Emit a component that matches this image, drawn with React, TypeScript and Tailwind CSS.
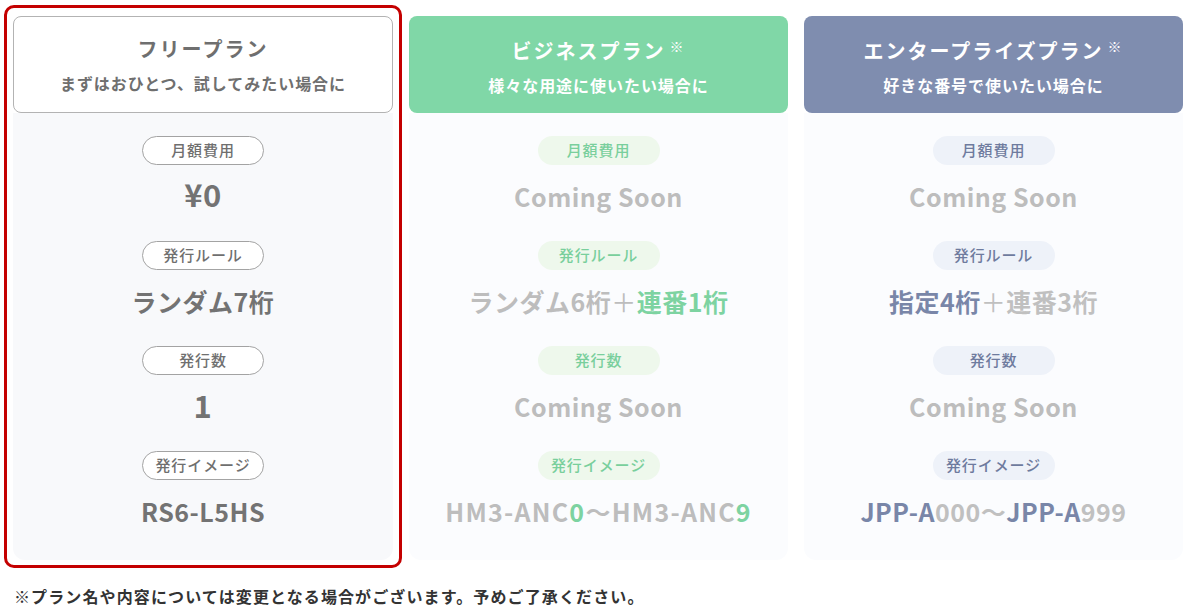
import React from 'react';

type Tone = 'free' | 'business' | 'enterprise';

const pillStyles: Record<Tone, string> = {
  free: 'bg-white border border-[#a3a3a3] text-[#6f6f6f]',
  business: 'bg-[#eef8ec] text-[#79cf9c]',
  enterprise: 'bg-[#eef2f9] text-[#6e7b9e]',
};

const bodyStyles: Record<Tone, string> = {
  free: 'bg-[#f8f9fb]',
  business: 'bg-[#fbfcfe]',
  enterprise: 'bg-[#fbfcfe]',
};

function Item({ label, tone, children }: { label: string; tone: Tone; children: React.ReactNode }) {
  return (
    <div className="flex flex-col items-center">
      <div
        className={`w-[122px] h-[29px] rounded-full flex items-center justify-center text-[15px] font-medium tracking-[0.06em] ${pillStyles[tone]}`}
      >
        {label}
      </div>
      <div className="mt-[11px] h-[40px] flex items-center text-[25px] font-bold tracking-[0.02em] leading-none">
        {children}
      </div>
    </div>
  );
}

function Header({ title, sub, tone, mark }: { title: string; sub: string; tone: Tone; mark?: boolean }) {
  const box =
    tone === 'free'
      ? 'bg-white border border-[#b3b3b3] text-[#6f6f6f]'
      : tone === 'business'
        ? 'bg-[#80d7a7] text-white'
        : 'bg-[#7f8daf] text-white';
  return (
    <div className={`h-[97px] rounded-[8px] flex flex-col items-center justify-center gap-[8px] ${box}`}>
      <div className="text-[20px] font-bold leading-[28px] tracking-[0.1em]">
        {title}
        {mark && <span className="ml-[4px] text-[14px] font-medium align-[7px]">※</span>}
      </div>
      <div className="text-[16px] font-bold leading-[24px] tracking-[0.06em]">{sub}</div>
    </div>
  );
}

function Column({ tone, header, items }: { tone: Tone; header: React.ReactNode; items: { label: string; value: React.ReactNode }[] }) {
  return (
    <div className="flex flex-col">
      {header}
      <div className={`rounded-b-[12px] pt-[23px] pb-[29px] flex flex-col gap-[25px] ${bodyStyles[tone]}`}>
        {items.map((it) => (
          <Item key={it.label} label={it.label} tone={tone}>
            {it.value}
          </Item>
        ))}
      </div>
    </div>
  );
}

export default function App() {
  const soon = <span className="text-[#bdbdbd]">Coming Soon</span>;

  return (
    <div
      className="w-[1200px] h-[613px] bg-white pl-[4px] pt-[5px] overflow-hidden"
      style={{ fontFamily: '"Noto Sans CJK JP", "Noto Sans", sans-serif' }}
    >
      <div className="flex items-start">
        <div className="w-[398px] border-[3px] border-[#c40000] rounded-[10px] pt-[8px] pb-[5px] px-[6px]">
          <Column
            tone="free"
            header={<Header tone="free" title="フリープラン" sub="まずはおひとつ、試してみたい場合に" />}
            items={[
              { label: '月額費用', value: <span className="text-[31px] text-[#737373] -mt-[6px]">¥0</span> },
              { label: '発行ルール', value: <span className="text-[#737373]">ランダム7桁</span> },
              { label: '発行数', value: <span className="text-[31px] text-[#737373] -mt-[4px]">1</span> },
              { label: '発行イメージ', value: <span className="text-[#737373]">RS6-L5HS</span> },
            ]}
          />
        </div>

        <div className="w-[379px] ml-[7px] pt-[11px]">
          <Column
            tone="business"
            header={<Header tone="business" title="ビジネスプラン" sub="様々な用途に使いたい場合に" mark />}
            items={[
              { label: '月額費用', value: soon },
              {
                label: '発行ルール',
                value: (
                  <span className="text-[#bdbdbd]">
                    ランダム6桁<span className="font-normal">＋</span>
                    <span className="text-[#7dd3a1]">連番1桁</span>
                  </span>
                ),
              },
              { label: '発行数', value: soon },
              {
                label: '発行イメージ',
                value: (
                  <span className="text-[#bdbdbd] tracking-[0.05em]">
                    HM3-ANC<span className="text-[#7dd3a1]">0</span>〜HM3-ANC
                    <span className="text-[#7dd3a1]">9</span>
                  </span>
                ),
              },
            ]}
          />
        </div>

        <div className="w-[379px] ml-[16px] pt-[11px]">
          <Column
            tone="enterprise"
            header={<Header tone="enterprise" title="エンタープライズプラン" sub="好きな番号で使いたい場合に" mark />}
            items={[
              { label: '月額費用', value: soon },
              {
                label: '発行ルール',
                value: (
                  <span className="text-[#c0c0c0]">
                    <span className="text-[#7986a8]">指定4桁</span>
                    <span className="font-normal">＋</span>連番3桁
                  </span>
                ),
              },
              { label: '発行数', value: soon },
              {
                label: '発行イメージ',
                value: (
                  <span className="text-[#c0c0c0]">
                    <span className="text-[#7986a8]">JPP-A</span>000〜<span className="text-[#7986a8]">JPP-A</span>999
                  </span>
                ),
              },
            ]}
          />
        </div>
      </div>

      <p className="mt-[16px] pl-[10px] text-[16px] font-bold leading-[24px] tracking-[0.07em] text-[#333333]">
        ※プラン名や内容については変更となる場合がございます。予めご了承ください。
      </p>
    </div>
  );
}
